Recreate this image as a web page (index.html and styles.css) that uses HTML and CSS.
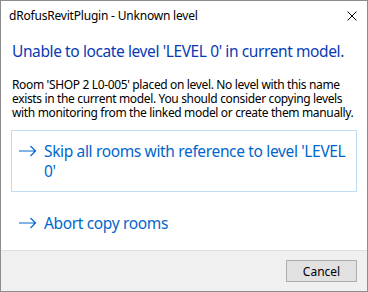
FILE: index.html
```html
<!DOCTYPE html>
<html>
<head>
<meta charset="utf-8">
<link rel="stylesheet" href="styles.css">
</head>
<body>
<div class="window">
  <div class="titlebar">
    <span class="title">dRofusRevitPlugin - Unknown level</span>
    <svg class="close" width="10" height="10" viewBox="0 0 10 10"><path d="M0.5 0.5 L9.5 9.5 M9.5 0.5 L0.5 9.5" stroke="#000" stroke-width="1" fill="none"/></svg>
  </div>
  <div class="content">
    <div class="instruction">Unable to locate level 'LEVEL 0' in current model.</div>
    <div class="message">Room 'SHOP 2 L0-005' placed on level. No level with this name exists in the current model. You should consider copying levels with monitoring from the linked model or create them manually.</div>
    <div class="links">
      <div class="cmdlink hover">
        <svg class="arrow" width="18" height="12" viewBox="0 0 18 12"><path d="M0 6 H16.5 M11.5 1 L16.5 6 L11.5 11" stroke="#0066cc" stroke-width="1.2" fill="none"/></svg>
        <span class="cmdtext">Skip all rooms with reference to level 'LEVEL 0'</span>
      </div>
      <div class="cmdlink">
        <svg class="arrow" width="18" height="12" viewBox="0 0 18 12"><path d="M0 6 H16.5 M11.5 1 L16.5 6 L11.5 11" stroke="#0066cc" stroke-width="1.2" fill="none"/></svg>
        <span class="cmdtext">Abort copy rooms</span>
      </div>
    </div>
  </div>
  <div class="footer">
    <button class="btn">Cancel</button>
  </div>
</div>
</body>
</html>
```
FILE: styles.css
```css
html, body {
  margin: 0;
  padding: 0;
  background: #fff;
}
.window {
  box-sizing: border-box;
  width: 368px;
  height: 292px;
  border: 1px solid #8c8c8c;
  background: #fff;
  display: flex;
  flex-direction: column;
  font-family: "Noto Sans", "Open Sans", sans-serif;
  overflow: hidden;
}
.titlebar {
  flex: none;
  height: 29px;
  display: flex;
  align-items: center;
  justify-content: space-between;
  padding: 0 10px 0 8px;
}
.title {
  font-size: 12px;
  color: #000;
  letter-spacing: -0.2px;
}
.close {
  display: block;
}
.content {
  flex: 1;
  min-height: 0;
  padding: 11px 3px 0 10px;
}
.instruction {
  font-size: 15.5px;
  line-height: 21px;
  color: #0a3bb5;
  padding-left: 1px;
  letter-spacing: -0.4px;
  white-space: nowrap;
}
.message {
  margin-top: 16px;
  font-size: 12px;
  line-height: 14px;
  color: #000;
  padding-left: 1px;
  letter-spacing: -0.35px;
}
.links {
  margin-top: 10px;
  margin-right: 7px;
  display: flex;
  flex-direction: column;
  gap: 10px;
}
.cmdlink {
  display: flex;
  align-items: flex-start;
  padding: 10px 2px 0 7px;
  border: 1px solid transparent;
}
.cmdlink.hover {
  border-color: #c0dcf3;
  padding-bottom: 10px;
}
.arrow {
  flex: none;
  margin-top: 4px;
  margin-right: 7px;
}
.cmdtext {
  font-size: 15.5px;
  line-height: 20px;
  color: #0066cc;
  letter-spacing: -0.35px;
}
.footer {
  flex: none;
  height: 41px;
  background: #f0f0f0;
  border-top: 1px solid #dfdfdf;
  display: flex;
  justify-content: flex-end;
  align-items: flex-start;
  padding: 9px 10px 0 0;
  box-sizing: border-box;
}
.btn {
  width: 71px;
  height: 22px;
  background: #e1e1e1;
  border: 1px solid #adadad;
  font-family: "Noto Sans", "Open Sans", sans-serif;
  font-size: 12px;
  color: #000;
  padding: 0;
  margin: 0;
}
```
